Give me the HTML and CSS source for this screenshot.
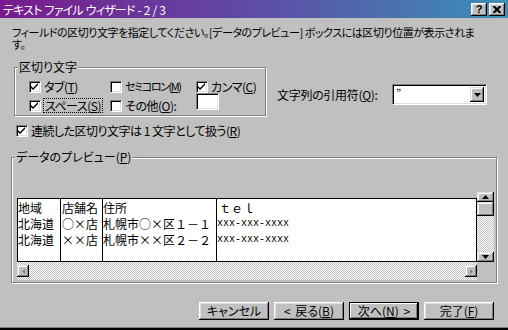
FILE: index.html
```html
<!DOCTYPE html>
<html lang="ja">
<head>
    <meta charset="UTF-8">
    <meta name="viewport" content="width=device-width, initial-scale=1.0">
    <title>テキスト ファイル ウィザード - 2 / 3</title>
    <link rel="stylesheet" href="styles.css">
</head>
<body>
    <div class="dialog">
        <div class="titlebar">
            <span class="title">テキスト ファイル ウィザード - 2 / 3</span>
            <div class="title-buttons">
                <span class="tbtn">?</span>
                <span class="tbtn">
                    <svg width="8" height="7" viewBox="0 0 8 7"><path d="M0 0h2l2 2 2-2h2v1L5.5 3.5 8 6v1H6L4 5 2 7H0V6l2.5-2.5L0 1z" fill="#000"/></svg>
                </span>
            </div>
        </div>

        <p class="desc">フィールドの区切り文字を指定してください。[データのプレビュー] ボックスには区切り位置が表示されます。</p>

        <div class="options">
            <div class="group delims">
                <span class="legend">区切り文字</span>
                <div class="check-grid">
                    <label class="check"><span class="box"><svg width="8" height="8" viewBox="0 0 8 8"><path d="M0 3l2 2 5-5v2L2 7 0 5z"/></svg></span><span>タブ(<u>T</u>)</span></label>
                    <label class="check"><span class="box"></span><span class="narrow">セミコロン(<u>M</u>)</span></label>
                    <label class="check"><span class="box"><svg width="8" height="8" viewBox="0 0 8 8"><path d="M0 3l2 2 5-5v2L2 7 0 5z"/></svg></span><span>カンマ(<u>C</u>)</span></label>
                    <label class="check"><span class="box"><svg width="8" height="8" viewBox="0 0 8 8"><path d="M0 3l2 2 5-5v2L2 7 0 5z"/></svg></span><span class="focus">スペース(<u>S</u>)</span></label>
                    <label class="check"><span class="box"></span><span>その他(<u>O</u>):</span></label>
                    <span class="field other"></span>
                </div>
            </div>
            <div class="quote">
                <span class="quote-label">文字列の引用符(<u>Q</u>):</span>
                <div class="combo">
                    <span class="combo-value">”</span>
                    <span class="combo-btn"><svg width="7" height="4" viewBox="0 0 7 4"><path d="M0 0h7L3.5 4z"/></svg></span>
                </div>
            </div>
        </div>

        <label class="check consecutive"><span class="box"><svg width="8" height="8" viewBox="0 0 8 8"><path d="M0 3l2 2 5-5v2L2 7 0 5z"/></svg></span><span>連続した区切り文字は 1 文字として扱う(<u>R</u>)</span></label>

        <div class="group preview">
            <span class="legend">データのプレビュー(<u>P</u>)</span>
            <div class="preview-box">
                <div class="preview-main">
                    <div class="data">
                        <div class="col c1"><div>地域</div><div>北海道</div><div>北海道</div></div>
                        <div class="col c2"><div>店舗名</div><div>○×店</div><div>××店</div></div>
                        <div class="col c3"><div>住所</div><div>札幌市○×区１－１</div><div>札幌市××区２－２</div></div>
                        <div class="col c4"><div>ｔｅｌ</div><div class="num">xxx-xxx-xxxx</div><div class="num">xxx-xxx-xxxx</div></div>
                    </div>
                    <div class="hscroll">
                        <span class="sbtn off"><svg width="3" height="5" viewBox="0 0 3 5"><path d="M3 0v5L0 2.5z"/></svg></span>
                        <span class="sbtn off"><svg width="3" height="5" viewBox="0 0 3 5"><path d="M0 0v5l3-2.5z"/></svg></span>
                    </div>
                </div>
                <div class="vscroll">
                    <span class="sbtn"><svg width="7" height="4" viewBox="0 0 7 4"><path d="M0 4h7L3.5 0z"/></svg></span>
                    <span class="thumb"></span>
                    <span class="track"></span>
                    <span class="sbtn"><svg width="7" height="4" viewBox="0 0 7 4"><path d="M0 0h7L3.5 4z"/></svg></span>
                </div>
            </div>
        </div>

        <div class="buttons">
            <button class="btn">キャンセル</button>
            <button class="btn">&lt; 戻る(<u>B</u>)</button>
            <button class="btn default">次へ(<u>N</u>) &gt;</button>
            <button class="btn">完了(<u>F</u>)</button>
        </div>
    </div>
</body>
</html>
```

FILE: styles.css
```css
body {
    margin: 0;
    background: #c0c0c0;
}
.dialog {
    width: 508px;
    height: 330px;
    box-sizing: border-box;
    background: #c0c0c0;
    border-bottom: 2px solid #000;
    box-shadow: inset 0 -1px #808080;
    font: 12px/13px "Noto Sans CJK JP", sans-serif;
    font-feature-settings: "palt";
    color: #000;
    overflow: hidden;
}
u {
    text-underline-offset: 1px;
}
.titlebar {
    height: 18px;
    display: flex;
    align-items: center;
    justify-content: space-between;
    padding: 0 3px 0 3px;
    background: linear-gradient(to right, #7a1a8c, #5e4ca6 50%, #3a90b8);
    color: #fff;
}
.title {
    letter-spacing: -0.8px;
    word-spacing: 1px;
}
.title-buttons {
    display: flex;
    gap: 2px;
}
.tbtn {
    width: 16px;
    height: 13px;
    box-sizing: border-box;
    display: flex;
    align-items: center;
    justify-content: center;
    background: #c0c0c0;
    color: #000;
    font: bold 11px/1 "Liberation Sans", sans-serif;
    box-shadow: inset -1px -1px #000, inset 1px 1px #fff, inset -2px -2px #808080, inset 2px 2px #dfdfdf;
}
.desc {
    margin: 8px 29px 0 12px;
    font-size: 11px;
    line-height: 12px;
    letter-spacing: -0.45px;
}
.options {
    display: flex;
    margin: 17px 0 0 14px;
}
.group {
    position: relative;
    box-sizing: border-box;
    border: 1px solid #808080;
    box-shadow: inset 1px 1px #fff, 1px 1px #fff;
}
.legend {
    position: absolute;
    top: -8px;
    left: 3px;
    padding: 0 1px;
    background: #c0c0c0;
}
.delims {
    width: 252px;
    height: 49px;
    padding: 12px 0 0 14px;
}
.check-grid {
    display: grid;
    grid-template-columns: 81px 86px auto;
    align-items: end;
}
.check {
    display: flex;
    align-items: center;
    gap: 3px;
    height: 13px;
    white-space: nowrap;
    letter-spacing: -0.5px;
}
.narrow {
    font-size: 11px;
    letter-spacing: -1.4px;
}
.box {
    width: 12px;
    height: 12px;
    flex: none;
    box-sizing: border-box;
    display: flex;
    align-items: center;
    justify-content: center;
    background: #fff;
    border: 1px solid;
    border-color: #808080 #fff #fff #808080;
    box-shadow: inset 1px 1px #000, inset -1px -1px #dfdfdf;
}
.focus {
    outline: 1px dotted #000;
    outline-offset: 0;
    padding: 0 1px;
}
.field {
    display: block;
    box-sizing: border-box;
    background: #fff;
    border: 1px solid;
    border-color: #808080 #fff #fff #808080;
    box-shadow: inset 1px 1px #000, inset -1px -1px #dfdfdf;
}
.other {
    width: 23px;
    height: 17px;
    margin-bottom: 2px;
}
.quote {
    display: flex;
    align-items: center;
    margin: 6px 0 0 11px;
}
.quote-label {
    width: 115px;
    letter-spacing: -0.3px;
}
.combo {
    width: 95px;
    height: 21px;
    box-sizing: border-box;
    display: flex;
    justify-content: space-between;
    padding: 2px;
    background: #fff;
    border: 1px solid;
    border-color: #808080 #fff #fff #808080;
    box-shadow: inset 1px 1px #000, inset -1px -1px #dfdfdf;
}
.combo-value {
    font-size: 11px;
    line-height: 10px;
    padding-left: 1px;
}
.combo-btn {
    width: 14px;
    display: flex;
    align-items: center;
    justify-content: center;
    background: #c0c0c0;
    box-shadow: inset -1px -1px #000, inset 1px 1px #dfdfdf, inset -2px -2px #808080, inset 2px 2px #fff;
}
.consecutive {
    margin: 8px 0 0 16px;
}
.preview {
    width: 486px;
    height: 126px;
    margin: 20px 0 0 11px;
    padding: 34px 2px 0 5px;
}
.preview-box {
    display: flex;
}
.preview-main {
    width: 460px;
    margin-top: 6px;
}
.data {
    display: flex;
    height: 64px;
    box-sizing: border-box;
    border: 1px solid #000;
    background: #fff;
    font-feature-settings: normal;
    line-height: 16px;
}
.col {
    box-sizing: border-box;
    padding-top: 1px;
    border-right: 1px solid #000;
    white-space: nowrap;
}
.c1 { width: 43px; }
.c2 { width: 42px; padding-left: 1px; }
.c3 { width: 114px; }
.c4 {
    flex: 1;
    border-right: none;
    padding-left: 2px;
}
.num {
    font: 10px/16px "Liberation Mono", monospace;
    margin-left: -2px;
}
.hscroll {
    height: 18px;
    display: flex;
    align-items: center;
    justify-content: space-between;
    background: repeating-conic-gradient(#c0c0c0 0 25%, #fff 0 50%) 0 0 / 2px 2px;
}
.sbtn {
    width: 12px;
    height: 12px;
    box-sizing: border-box;
    display: flex;
    align-items: center;
    justify-content: center;
    background: #c0c0c0;
    box-shadow: inset -1px -1px #000, inset 1px 1px #dfdfdf, inset -2px -2px #808080, inset 2px 2px #fff;
}
.sbtn.off path {
    fill: #808080;
}
.vscroll {
    width: 17px;
    height: 70px;
    display: flex;
    flex-direction: column;
    background: repeating-conic-gradient(#c0c0c0 0 25%, #fff 0 50%) 0 0 / 2px 2px;
}
.vscroll .sbtn {
    width: 17px;
    height: 10px;
}
.thumb {
    height: 14px;
    background: #c0c0c0;
    box-shadow: inset -1px -1px #000, inset 1px 1px #dfdfdf, inset -2px -2px #808080, inset 2px 2px #fff;
}
.track {
    flex: 1;
}
.buttons {
    display: flex;
    justify-content: flex-end;
    gap: 5px;
    margin-top: 19px;
    padding-right: 14px;
}
.btn {
    width: 70px;
    height: 18px;
    padding: 0;
    border: none;
    background: #c0c0c0;
    font: inherit;
    line-height: 16px;
    color: #000;
    word-spacing: 2px;
    box-shadow: inset -1px -1px #000, inset 1px 1px #fff, inset -2px -2px #808080, inset 2px 2px #dfdfdf;
}
.btn.default {
    border: 1px solid #000;
    box-shadow: inset -1px -1px #000, inset 1px 1px #fff, inset -2px -2px #808080;
}
```
